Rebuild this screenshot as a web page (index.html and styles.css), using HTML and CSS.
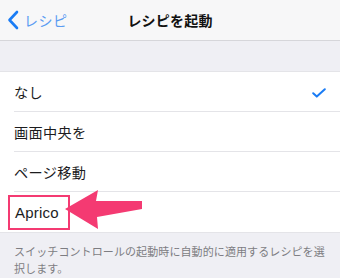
FILE: index.html
```html
<!DOCTYPE html>
<html lang="ja">
<head>
<meta charset="utf-8">
<link rel="stylesheet" href="styles.css">
</head>
<body>
<div class="screen">
  <header class="nav">
    <div class="back">
      <svg class="chev" width="12" height="20" viewBox="0 0 12 20"><path d="M10 2 L2.5 10 L10 18" fill="none" stroke="#1a7cf5" stroke-width="2.6" stroke-linecap="round" stroke-linejoin="round"/></svg>
      <span class="back-label">レシピ</span>
    </div>
    <div class="title">レシピを起動</div>
  </header>
  <div class="gap"></div>
  <ul class="list">
    <li class="row"><span>なし</span>
      <svg class="check" width="14" height="10" viewBox="0 0 14 10"><path d="M1.2 5.2 L4.8 8.6 L12.8 1.2" fill="none" stroke="#1a7cf5" stroke-width="2" stroke-linecap="round" stroke-linejoin="round"/></svg>
    </li>
    <li class="row"><span>画面中央を</span></li>
    <li class="row"><span>ページ移動</span></li>
    <li class="row last"><span class="aprico">Aprico</span></li>
  </ul>
  <p class="footer">スイッチコントロールの起動時に自動的に適用するレシピを選<br>択します。</p>
  <svg class="arrow" width="84" height="46" viewBox="0 0 84 46"><polygon points="4,23 37,4 35,15 81,15 81,23 36,31 37,43" fill="#f43a72"/></svg>
</div>
</body>
</html>
```
FILE: styles.css
```css
* { box-sizing: border-box; margin: 0; padding: 0; }
html, body { width: 340px; height: 278px; overflow: hidden; }
body { font-family: "Noto Sans CJK JP", "Noto Sans", sans-serif; background: #efeff4; }
.screen { position: relative; width: 340px; height: 278px; }
.nav {
  height: 41px;
  background: #f7f7f8;
  border-bottom: 1px solid #d6d6da;
  position: relative;
  display: flex;
  align-items: center;
}
.back { display: flex; align-items: center; padding-left: 7px; gap: 5px; }
.chev { display: block; }
.back-label { color: #5b9cf2; font-size: 14px; letter-spacing: 0.5px; }
.title {
  position: absolute; left: 0; right: 0; top: 0; height: 40px;
  display: flex; align-items: center; justify-content: center;
  font-size: 14px; font-weight: 700; color: #111; letter-spacing: 0.2px;
}
.gap { height: 30px; }
.list { list-style: none; background: #fff; border-top: 1px solid #e4e4e8; border-bottom: 1px solid #e4e4e8; }
.row {
  height: 40px;
  margin-left: 14px;
  padding-right: 14px;
  border-bottom: 1px solid #e4e4e8;
  display: flex; align-items: center; justify-content: space-between;
  font-size: 14.2px; color: #1c1c1e; letter-spacing: 0.3px;
}
.row.last { border-bottom: none; }
.check { margin-top: 2px; }
.aprico {
  font-family: "Liberation Sans", "Noto Sans", sans-serif;
  font-size: 15px; letter-spacing: 0.2px;
  display: inline-flex; align-items: center;
  height: 35px; width: 62px;
  margin-left: -6px; padding-left: 5px;
  border: 2px solid #f43a72;
}
.footer {
  padding: 10px 4px 0 14px;
  font-size: 11px; line-height: 17px; color: #7d7d82; letter-spacing: 0.1px;
  white-space: nowrap;
}
.arrow { position: absolute; left: 61px; top: 186px; }
```
